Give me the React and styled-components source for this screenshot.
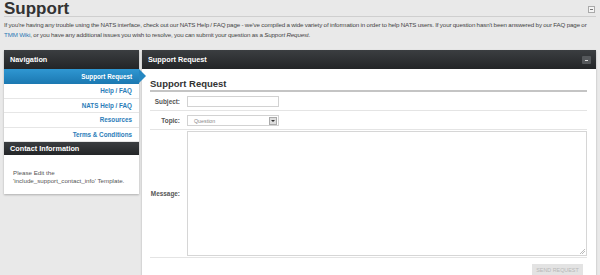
import styled, { createGlobalStyle } from "styled-components";

const GlobalStyle = createGlobalStyle`
  html, body {
    margin: 0;
    padding: 0;
    background: #e9e9e9;
    font-family: "Liberation Sans", Arial, sans-serif;
    color: #444;
  }
`;

const Page = styled.div`
  padding: 0 4px;
  height: 275px;
  display: flex;
  flex-direction: column;
  overflow: hidden;
`;

const TitleBar = styled.div`
  display: flex;
  justify-content: space-between;
  align-items: flex-end;
  height: 16px;
  border-bottom: 1px solid #cfcfcf;
`;

const Title = styled.h1`
  margin: 0;
  font-size: 17px;
  line-height: 17px;
  font-weight: bold;
  color: #333;
  transform: translateY(1px);
`;

const Collapse = styled.span`
  width: 5px;
  height: 5px;
  border: 1px solid #aaa;
  background: #f4f4f4;
  margin: 0 1px 3px 0;
  position: relative;
  &::after {
    content: "";
    position: absolute;
    left: 1px;
    top: 2px;
    width: 3px;
    height: 1px;
    background: #777;
  }
`;

const Intro = styled.p`
  margin: 3px 0 0;
  font-size: 6.2px;
  letter-spacing: -0.12px;
  word-spacing: -0.2px;
  line-height: 10px;
  color: #444;
  white-space: nowrap;
  a {
    color: #2a7ab5;
    text-decoration: none;
  }
`;

const Columns = styled.div`
  display: flex;
  gap: 3px;
  margin-top: 10px;
  flex: 1;
  align-items: flex-start;
`;

const Side = styled.div`
  width: 135px;
  flex: none;
  background: #fff;
  box-shadow: 0 1px 2px rgba(0, 0, 0, 0.25);
`;

const PanelHead = styled.div`
  height: ${(p) => p.h || 19}px;
  display: flex;
  align-items: center;
  justify-content: space-between;
  padding: 0 5px 0 6px;
  background: linear-gradient(#3b3e41, #232527);
  color: #fff;
  font-size: 7.3px;
  font-weight: bold;
`;

const NavItem = styled.div`
  position: relative;
  height: ${(p) => (p.active ? 15 : 13.5)}px;
  display: flex;
  align-items: center;
  justify-content: flex-end;
  padding-right: 7px;
  font-size: 6.3px;
  font-weight: bold;
  color: ${(p) => (p.active ? "#fff" : "#2b7cb8")};
  background: ${(p) =>
    p.active ? "linear-gradient(#2f97d2, #1b78b1)" : "#fff"};
  border-bottom: ${(p) => (p.active ? "none" : "1px solid #e6e6e6")};
  &::after {
    content: "";
    display: ${(p) => (p.active ? "block" : "none")};
    position: absolute;
    right: -7px;
    top: 0;
    border-top: 7.5px solid transparent;
    border-bottom: 7.5px solid transparent;
    border-left: 7px solid #2587c1;
  }
`;

const ContactBody = styled.div`
  padding: 14px 8px 9px 9px;
  font-size: 6.2px;
  line-height: 8px;
  color: #555;
  white-space: nowrap;
`;

const Main = styled.div`
  flex: 1;
  align-self: stretch;
  background: #fff;
  box-shadow: 0 1px 2px rgba(0, 0, 0, 0.25);
  display: flex;
  flex-direction: column;
`;

const MinBtn = styled.span`
  width: 9px;
  height: 8px;
  border-radius: 1px;
  background: #55585b;
  position: relative;
  &::after {
    content: "";
    position: absolute;
    left: 3px;
    top: 4px;
    width: 3px;
    height: 1px;
    background: #ddd;
  }
`;

const FormArea = styled.div`
  padding: 8px 9px 0 8px;
  display: flex;
  flex-direction: column;
`;

const FormTitle = styled.h2`
  margin: 0;
  font-size: 9.5px;
  line-height: 13px;
  font-weight: bold;
  color: #333;
  border-bottom: 2px solid #c4c4c4;
`;

const Row = styled.div`
  display: grid;
  grid-template-columns: 30px 1fr;
  column-gap: 7px;
  align-items: center;
  padding: ${(p) => p.pad || "4px 0 3px"};
  border-bottom: 1px solid #e4e4e4;
`;

const Label = styled.label`
  text-align: right;
  font-size: 6.4px;
  font-weight: bold;
  color: #555;
`;

const TextInput = styled.div`
  width: 90px;
  height: 9px;
  border: 1px solid #d2d2d2;
  background: #fff;
`;

const Select = styled.div`
  box-sizing: border-box;
  width: 92px;
  height: 11px;
  border: 1px solid #d2d2d2;
  display: flex;
  align-items: center;
  justify-content: space-between;
  font-size: 5.3px;
  color: #888;
  padding-left: 6px;
`;

const Arrow = styled.span`
  width: 6px;
  height: 6px;
  margin-right: 1px;
  background: #ddd;
  border: 1px solid #aaa;
  position: relative;
  &::after {
    content: "";
    position: absolute;
    left: 1px;
    top: 2px;
    border-left: 2px solid transparent;
    border-right: 2px solid transparent;
    border-top: 2px solid #333;
  }
`;

const TextArea = styled.div`
  height: 123px;
  border: 1px solid #d6d6d6;
  position: relative;
  &::after {
    content: "";
    position: absolute;
    right: 1px;
    bottom: 1px;
    width: 5px;
    height: 5px;
    background: linear-gradient(
      135deg,
      transparent 45%,
      #bbb 45%,
      #bbb 55%,
      transparent 55%,
      transparent 70%,
      #bbb 70%,
      #bbb 80%,
      transparent 80%
    );
  }
`;

const Actions = styled.div`
  display: flex;
  justify-content: flex-end;
  padding: 6px 4px 0 0;
`;

const SendButton = styled.button`
  width: 51px;
  height: 11px;
  padding: 0;
  border: none;
  background: #e3e3e3;
  color: #b8b8b8;
  font-family: inherit;
  font-size: 5.4px;
`;

const navItems = ["Help / FAQ", "NATS Help / FAQ", "Resources", "Terms & Conditions"];

const App = () => {
  return (
    <>
      <GlobalStyle />
      <Page>
        <TitleBar>
          <Title>Support</Title>
          <Collapse />
        </TitleBar>
        <Intro>
          If you're having any trouble using the NATS interface, check out our NATS Help / FAQ page - we've
          compiled a wide variety of information in order to help NATS users. If your question hasn't been
          answered by our FAQ page or
          <br />
          <a href="#">TMM Wiki</a>, or you have any additional issues you wish to resolve, you can submit your
          question as a <em>Support Request</em>.
        </Intro>
        <Columns>
          <Side>
            <PanelHead>Navigation</PanelHead>
            <NavItem active>Support Request</NavItem>
            {navItems.map((item) => (
              <NavItem key={item}>{item}</NavItem>
            ))}
            <PanelHead h={13}>Contact Information</PanelHead>
            <ContactBody>
              Please Edit the
              <br />
              'include_support_contact_info' Template.
            </ContactBody>
          </Side>
          <Main>
            <PanelHead>
              Support Request
              <MinBtn />
            </PanelHead>
            <FormArea>
              <FormTitle>Support Request</FormTitle>
              <Row>
                <Label>Subject:</Label>
                <TextInput />
              </Row>
              <Row pad="4px 0 3px">
                <Label>Topic:</Label>
                <Select>
                  Question
                  <Arrow />
                </Select>
              </Row>
              <Row pad="1px 0">
                <Label>Message:</Label>
                <TextArea />
              </Row>
              <Actions>
                <SendButton>SEND REQUEST</SendButton>
              </Actions>
            </FormArea>
          </Main>
        </Columns>
      </Page>
    </>
  );
};

export default App;
